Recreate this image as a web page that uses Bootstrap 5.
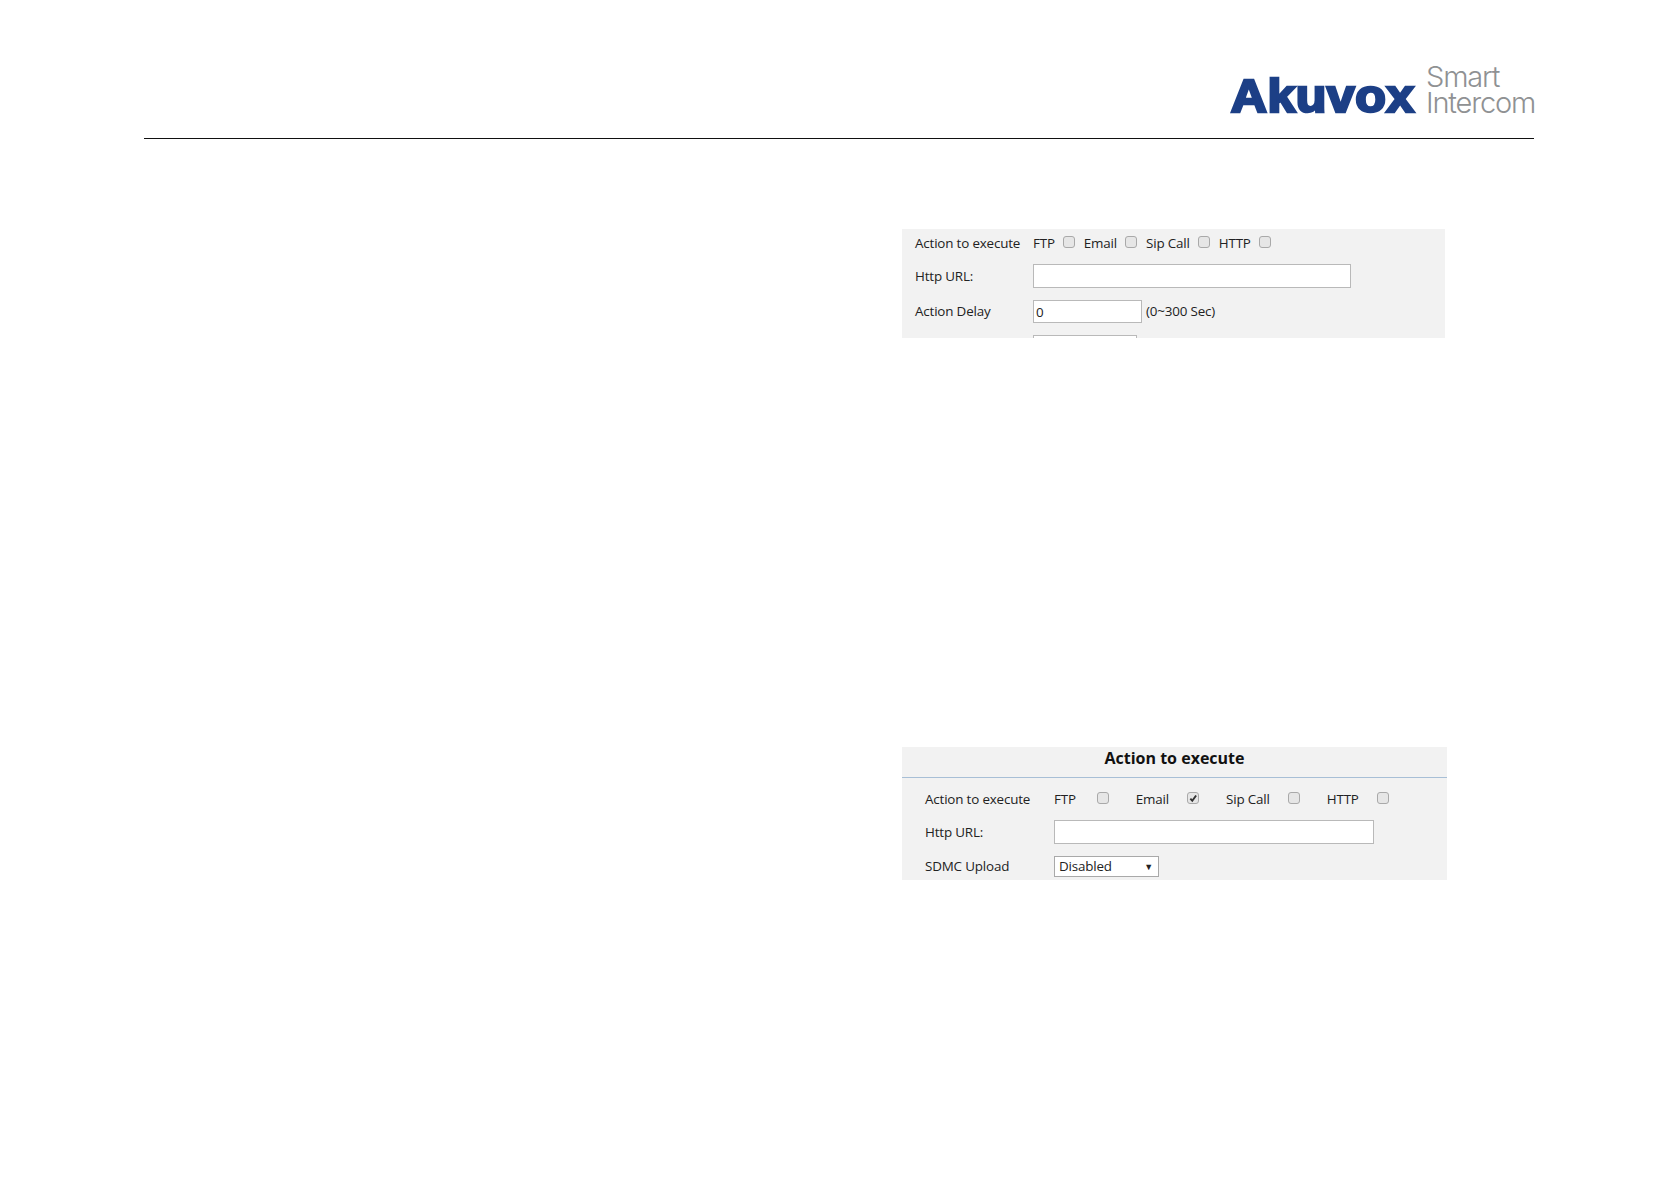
<!DOCTYPE html>
<html lang="en">
<head>
<meta charset="utf-8">
<title>Akuvox Smart Intercom</title>
<link rel="stylesheet" href="https://cdn.jsdelivr.net/npm/bootstrap@5.3.0/dist/css/bootstrap.min.css">
<style>
html,body{background:#fff;}
body{width:1678px;height:1185px;overflow:hidden;font-family:"Open Sans","Noto Sans",sans-serif;font-size:13.4px;letter-spacing:-.17px;color:#222;}
.doc-head{margin:0 144px;height:139px;border-bottom:1px solid #111;}
.brand{height:138px;padding-top:64px;gap:11px;}
.brand-main{font-family:"Liberation Sans",Arial,sans-serif;font-weight:700;font-size:46px;line-height:1;color:#1c3f86;-webkit-text-stroke:2.6px #1c3f86;letter-spacing:.4px;margin-top:9px;transform:scaleX(1.09);transform-origin:right center;}
.brand-sub{font-family:"Inter",sans-serif;font-weight:300;color:#8f9193;font-size:29px;line-height:26px;letter-spacing:-1.2px;margin-right:-1px;white-space:nowrap;}
.panel-a,.panel-b{background:#f2f2f2;overflow:hidden;margin-left:902px;}
.panel-a{width:543px;height:109px;margin-top:90px;padding:0 0 0 13px;}
.panel-b{width:545px;height:133px;margin-top:409px;}
.panel-title{height:31px;border-bottom:1px solid #a8bfd6;text-align:center;font-weight:700;font-size:16px;line-height:23px;color:#111;letter-spacing:0;}
.panel-rows{padding:6px 0 0 23px;}
.form-line{display:flex;align-items:center;white-space:nowrap;}
.line-label{width:118px;flex:none;}
.panel-b .line-label{width:129px;}
.a1{height:29px;margin-bottom:6px;}
.a2{height:24px;margin-bottom:12px;}
.a3{height:23px;margin-bottom:12px;}
.b1{height:31px;margin-bottom:5px;}
.b2{height:24px;margin-bottom:12px;}
.b3{height:21px;}
.field-box{border:1px solid #b9b9b9;background:#fff;height:100%;border-radius:0;padding:0 2px;font-size:13.4px;color:#222;font-family:inherit;outline:0;}
.w-url-a{width:318px;}
.w-url-b{width:320px;}
.w-delay{width:109px;}
.w-next{width:104px;}
.unit-note{margin-left:4px;}
.checks-a{gap:8px;}
.checks-a .form-check-input{margin:-3px 1px 0 0;}
.checks-b{gap:18px;}
.checks-b .form-check-input{margin:-3px 9px 0 0;}
.checks-b span:first-child{margin-right:3px;}
.form-check-input.box-check{width:12px;height:12px;flex:none;border:1px solid #a9a9a9;border-radius:3px;background-color:#e6e6e6;}
.form-check-input.box-check:checked{background-color:#e6e6e6;border-color:#a9a9a9;background-size:11px;background-image:url("data:image/svg+xml,%3csvg xmlns='http://www.w3.org/2000/svg' viewBox='0 0 12 12'%3e%3cpath fill='none' stroke='%23333' stroke-width='2' d='M3 6.5l2 2.2 4-5.5'/%3e%3c/svg%3e");}
.fake-select{width:105px;height:100%;padding:0 4px;border:1px solid #a9a9a9;background:#fff;}
.fake-caret{font-size:9px;margin-right:1px;}
</style>
</head>
<body>
<header class="doc-head">
  <div class="brand d-flex justify-content-end align-items-start">
    <span class="brand-main">Akuvox</span>
    <span class="brand-sub">Smart<br>Intercom</span>
  </div>
</header>

<section class="panel-a">
  <div class="form-line a1">
    <span class="line-label">Action to execute</span>
    <div class="d-flex align-items-center checks-a">
      <span>FTP</span><input class="form-check-input box-check" type="checkbox" aria-label="FTP">
      <span>Email</span><input class="form-check-input box-check" type="checkbox" aria-label="Email">
      <span>Sip Call</span><input class="form-check-input box-check" type="checkbox" aria-label="Sip Call">
      <span>HTTP</span><input class="form-check-input box-check" type="checkbox" aria-label="HTTP">
    </div>
  </div>
  <div class="form-line a2">
    <span class="line-label">Http URL:</span>
    <input class="field-box w-url-a" type="text" aria-label="Http URL">
  </div>
  <div class="form-line a3">
    <span class="line-label">Action Delay</span>
    <input class="field-box w-delay" type="text" value="0" aria-label="Action Delay">
    <span class="unit-note">(0~300 Sec)</span>
  </div>
  <div class="form-line a3">
    <span class="line-label"></span>
    <input class="field-box w-next" type="text" aria-label="More">
  </div>
</section>

<section class="panel-b">
  <div class="panel-title">Action to execute</div>
  <div class="panel-rows">
    <div class="form-line b1">
      <span class="line-label">Action to execute</span>
      <div class="d-flex align-items-center checks-b">
        <span>FTP</span><input class="form-check-input box-check" type="checkbox" aria-label="FTP">
        <span>Email</span><input class="form-check-input box-check" type="checkbox" checked aria-label="Email">
        <span>Sip Call</span><input class="form-check-input box-check" type="checkbox" aria-label="Sip Call">
        <span>HTTP</span><input class="form-check-input box-check" type="checkbox" aria-label="HTTP">
      </div>
    </div>
    <div class="form-line b2">
      <span class="line-label">Http URL:</span>
      <input class="field-box w-url-b" type="text" aria-label="Http URL">
    </div>
    <div class="form-line b3">
      <span class="line-label">SDMC Upload</span>
      <div class="fake-select d-flex justify-content-between align-items-center">
        <span>Disabled</span><span class="fake-caret">&#9660;</span>
      </div>
    </div>
  </div>
</section>
<script src="https://cdn.jsdelivr.net/npm/bootstrap@5.3.0/dist/js/bootstrap.bundle.min.js"></script>
</body>
</html>
